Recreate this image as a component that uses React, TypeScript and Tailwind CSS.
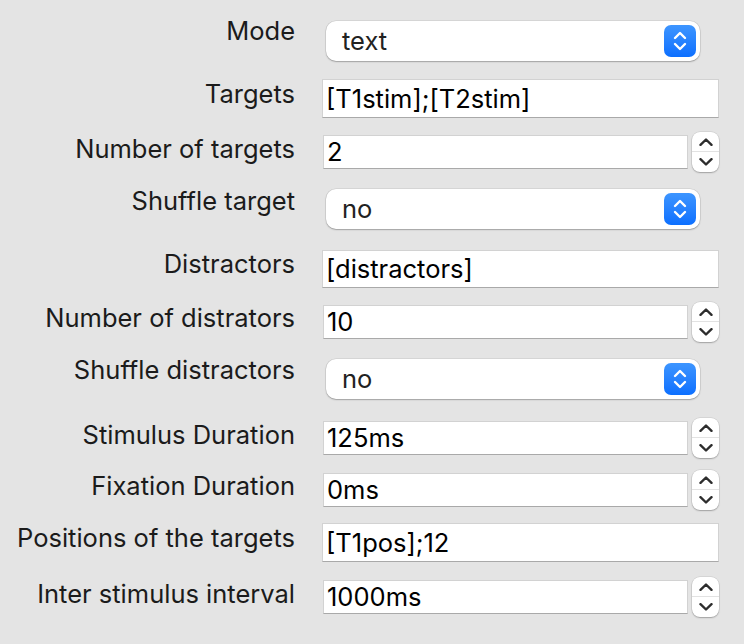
import React from "react";

const FONT = { fontFamily: 'Inter, "Liberation Sans", Arial, sans-serif' };

function Label({ text, mt }: { text: string; mt: string }) {
  return (
    <div className={`w-[295px] shrink-0 text-right text-[25.5px] leading-[16px] text-[#1b1b1b] ${mt}`}>
      {text}
    </div>
  );
}

function Popup({ value }: { value: string }) {
  return (
    <div className="ml-[31px] flex h-[40px] w-[374px] items-center justify-between rounded-[10px] bg-white pl-[16px] pr-[4px] shadow-[0_0_0_0.5px_rgba(0,0,0,0.12),0_1px_1.5px_rgba(0,0,0,0.25)]">
      <span className="text-[25.5px] leading-none text-[#222]">{value}</span>
      <div className="flex h-[32px] w-[32px] items-center justify-center rounded-[7px] bg-gradient-to-b from-[#3d95ff] to-[#0b6fff]">
        <svg width="32" height="32" viewBox="0 0 32 32" fill="none">
          <path d="M11 13 L16 8 L21 13" stroke="white" strokeWidth="2.4" strokeLinecap="round" strokeLinejoin="round" />
          <path d="M11 19 L16 24 L21 19" stroke="white" strokeWidth="2.4" strokeLinecap="round" strokeLinejoin="round" />
        </svg>
      </div>
    </div>
  );
}

function Field({ value, h }: { value: string; h: string }) {
  return (
    <div className={`ml-[27px] flex w-[397px] items-center border border-[#d2d2d2] border-b-[#a9a9a9] bg-white pl-[3px] ${h}`}>
      <span className="text-[25.5px] leading-none text-black">{value}</span>
    </div>
  );
}

function Stepper({ value }: { value: string }) {
  return (
    <div className="ml-[28px] flex items-start gap-[4px]">
      <div className="mt-[3px] flex h-[34px] w-[365px] items-center border border-[#d2d2d2] border-b-[#a9a9a9] bg-white pl-[3px]">
        <span className="text-[25.5px] leading-none text-black">{value}</span>
      </div>
      <div className="flex h-[40px] w-[27px] flex-col rounded-[8px] bg-white shadow-[0_0_0_0.5px_rgba(0,0,0,0.12),0_1px_1.5px_rgba(0,0,0,0.25)]">
        <div className="flex h-[20px] items-center justify-center border-b border-[#e2e2e2]">
          <svg width="14" height="8" viewBox="0 0 14 8" fill="none">
            <path d="M1.5 6.8 L7 1.5 L12.5 6.8" stroke="#2d2d2d" strokeWidth="2.4" strokeLinecap="round" strokeLinejoin="round" />
          </svg>
        </div>
        <div className="flex h-[20px] items-center justify-center">
          <svg width="14" height="8" viewBox="0 0 14 8" fill="none">
            <path d="M1.5 1.2 L7 6.5 L12.5 1.2" stroke="#2d2d2d" strokeWidth="2.4" strokeLinecap="round" strokeLinejoin="round" />
          </svg>
        </div>
      </div>
    </div>
  );
}

export default function App() {
  return (
    <div className="h-[644px] w-[744px] overflow-hidden bg-[#e4e4e4] pt-[21px]" style={FONT}>
      <div className="flex h-[58px] items-start">
        <Label text="Mode" mt="mt-[1.5px]" />
        <Popup value="text" />
      </div>
      <div className="flex h-[53px] items-start">
        <Label text="Targets" mt="mt-[6.5px]" />
        <Field value="[T1stim];[T2stim]" h="h-[39px]" />
      </div>
      <div className="flex h-[57px] items-start">
        <Label text="Number of targets" mt="mt-[8.5px]" />
        <Stepper value="2" />
      </div>
      <div className="flex h-[61px] items-start">
        <Label text="Shuffle target" mt="mt-[3.5px]" />
        <Popup value="no" />
      </div>
      <div className="flex h-[52px] items-start">
        <Label text="Distractors" mt="mt-[5.5px]" />
        <Field value="[distractors]" h="h-[38px]" />
      </div>
      <div className="flex h-[57px] items-start">
        <Label text="Number of distrators" mt="mt-[7.5px]" />
        <Stepper value="10" />
      </div>
      <div className="flex h-[59px] items-start">
        <Label text="Shuffle distractors" mt="mt-[2.5px]" />
        <Popup value="no" />
      </div>
      <div className="flex h-[52px] items-start">
        <Label text="Stimulus Duration" mt="mt-[8.5px]" />
        <Stepper value="125ms" />
      </div>
      <div className="flex h-[53px] items-start">
        <Label text="Fixation Duration" mt="mt-[7.5px]" />
        <Stepper value="0ms" />
      </div>
      <div className="flex h-[54px] items-start">
        <Label text="Positions of the targets" mt="mt-[6.5px]" />
        <Field value="[T1pos];12" h="h-[39px]" />
      </div>
      <div className="flex h-[60px] items-start">
        <Label text="Inter stimulus interval" mt="mt-[8.5px]" />
        <Stepper value="1000ms" />
      </div>
    </div>
  );
}
